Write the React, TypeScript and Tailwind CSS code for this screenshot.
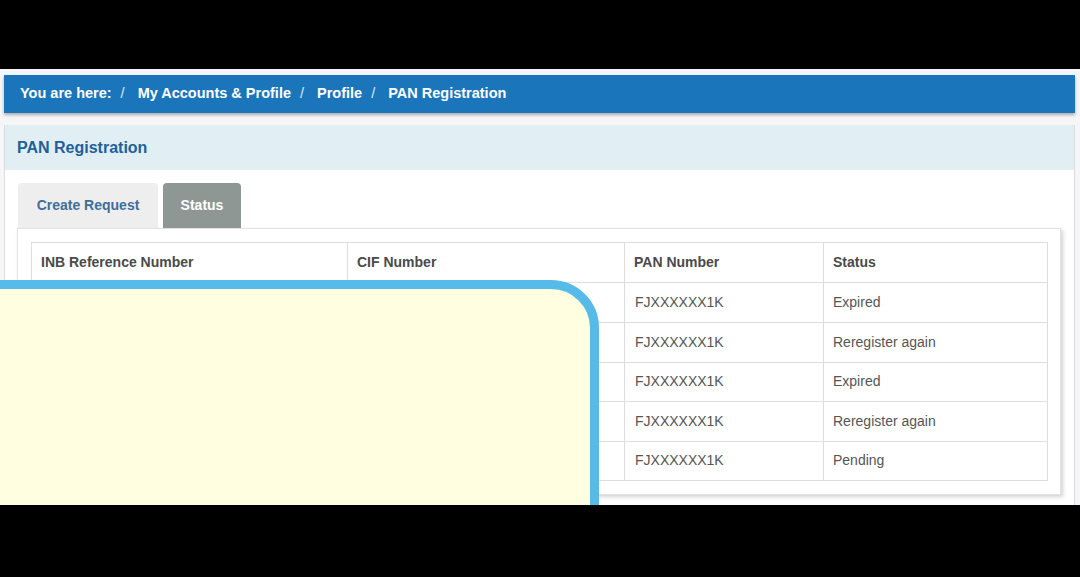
const rows = [
  { pan: 'FJXXXXXX1K', status: 'Expired' },
  { pan: 'FJXXXXXX1K', status: 'Reregister again' },
  { pan: 'FJXXXXXX1K', status: 'Expired' },
  { pan: 'FJXXXXXX1K', status: 'Reregister again' },
  { pan: 'FJXXXXXX1K', status: 'Pending' },
];

const crumbs = ['My Accounts & Profile', 'Profile', 'PAN Registration'];

const App = () => {
  return (
    <div className="w-[1080px] h-[577px] bg-black flex flex-col overflow-hidden font-['Liberation_Sans',Arial,sans-serif]">
      <div className="h-[69px] shrink-0" />
      <div className="relative h-[436px] shrink-0 overflow-hidden bg-[#f6f5f8] pl-[4px] pr-[5px]">
        {/* breadcrumb */}
        <div className="mt-[6px] h-[38px] bg-[#1b75bb] shadow-[0_2px_3px_rgba(0,0,0,0.3)] flex items-center pl-[16px] text-[14.5px] font-bold text-white">
          <span>You are here:</span>
          {crumbs.map((c) => (
            <span key={c} className="flex items-center">
              <span className="pl-[9px] pr-[13px] font-normal text-[#dce9f5]">/</span>
              <span>{c}</span>
            </span>
          ))}
        </div>

        {/* panel */}
        <div className="mt-[12px] border-x border-[#d9dde0] bg-white h-[400px]">
          <div className="h-[45px] bg-[#e1eef3] flex items-center pl-[12px] text-[16px] font-bold text-[#22609a]">
            PAN Registration
          </div>
          <div className="pt-[13px] pl-[12px] pr-[13px]">
            <div className="flex gap-[5px] pl-[1px] h-[45px]">
              <div className="w-[140px] h-full bg-[#eeeeee] rounded-t-[4px] flex items-center justify-center text-[14px] font-bold text-[#3f6e9b]">
                Create Request
              </div>
              <div className="w-[78px] h-full bg-[#8e9793] rounded-t-[4px] flex items-center justify-center text-[14px] font-bold text-white">
                Status
              </div>
            </div>
            <div className="border border-[#e2e2e2] bg-white p-[13px] shadow-[2px_2px_4px_rgba(0,0,0,0.18)]">
              <table className="w-full border-collapse text-[14px] text-[#555555] table-fixed">
                <colgroup>
                  <col className="w-[316px]" />
                  <col className="w-[277px]" />
                  <col className="w-[199px]" />
                  <col className="w-[224px]" />
                </colgroup>
                <thead>
                  <tr className="h-[40px]">
                    {['INB Reference Number', 'CIF Number', 'PAN Number', 'Status'].map((h) => (
                      <th
                        key={h}
                        className="border border-[#dddddd] text-left font-bold text-[#4a4a4a] pl-[9px]"
                      >
                        {h}
                      </th>
                    ))}
                  </tr>
                </thead>
                <tbody>
                  {rows.map((r, i) => (
                    <tr key={i} className={i === 0 ? 'h-[40px]' : 'h-[39.5px]'}>
                      <td className="border border-[#dddddd] pl-[9px]"></td>
                      <td className="border border-[#dddddd] pl-[9px]"></td>
                      <td className="border border-[#dddddd] pl-[10px]">{r.pan}</td>
                      <td className="border border-[#dddddd] pl-[9px]">{r.status}</td>
                    </tr>
                  ))}
                </tbody>
              </table>
            </div>
          </div>
        </div>

        {/* overlay note */}
        <div className="absolute left-[-20px] top-[211px] w-[619px] h-[300px] bg-[#fffee0] border-[9px] border-[#56bbe8] rounded-tr-[48px]" />
      </div>
      <div className="flex-1" />
    </div>
  );
};

export default App;
